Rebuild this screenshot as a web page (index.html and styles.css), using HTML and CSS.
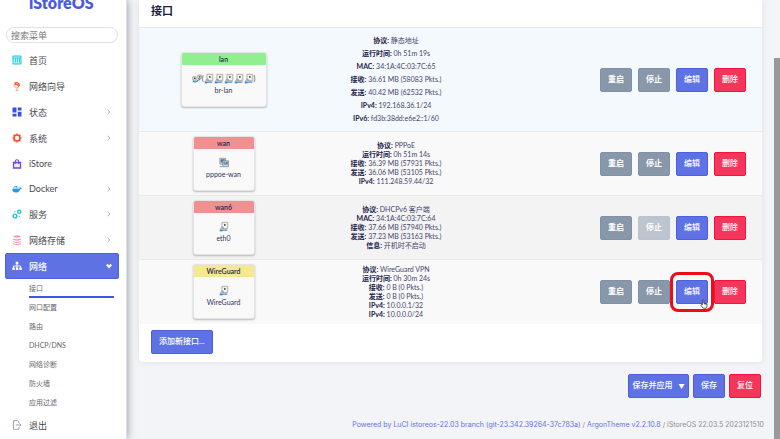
FILE: index.html
```
<!DOCTYPE html>
<html lang="zh-CN">
<head>
<meta charset="utf-8">
<meta name="viewport" content="width=device-width, initial-scale=1">
<title>iStoreOS - 接口</title>
<link rel="stylesheet" href="styles.css">
</head>
<body>
<svg class="defs" aria-hidden="true">
  <symbol id="chevron" viewBox="0 0 6 6"><path d="M1.5.8 4 3 1.5 5.2" fill="none" stroke="currentColor"/></symbol>
  <symbol id="port" viewBox="0 0 12 12">
    <path d="M3.5 1h7v7.500h-7z" fill="#efefe4" stroke="#a5a79f"/>
    <path d="M5 3h4v3.500H5z" fill="#fbfbf2"/>
    <path d="M6 3.200h2v2H6z" fill="#333"/>
    <path d="M1.500 9.500 4 6.500l2 1.800" fill="none" stroke="#6c7f91"/>
    <path d="M1 10.300h9" stroke="#4588d0" stroke-width="1.400"/>
    <path d="M1 11.200h3" stroke="#28609c"/>
  </symbol>
  <symbol id="bridge" viewBox="0 0 12 12">
    <path d="M1 4h4v4H1zM7 2h4v4H7z" fill="#e7e7dc" stroke="#92958f"/>
    <path d="M2.500 5h1.500v1.500H2.500zM8.500 3.200H10v1.500H8.500z" fill="#333"/>
    <path d="M1 9c2 2 5 1 6-1l3-1" fill="none" stroke="#4588d0" stroke-width="1.500"/>
  </symbol>
  <symbol id="tunnel" viewBox="0 0 12 12">
    <path d="M1 1h7v7H1z" fill="#e4e4d8" stroke="#92958f"/>
    <path d="M2 2h5v4H2z" fill="#3975b6"/>
    <path d="M4.500 4h7v7h-7z" fill="#d9d9cc" stroke="#858a88"/>
    <path d="M5.500 5h5v3.500h-5z" fill="#3f80c6"/>
    <path d="M6.500 6h2v1h-2z" fill="#e6f1fb"/>
    <path d="M1 11h3" stroke="#4588d0"/>
  </symbol>
</svg>

<aside class="sidebar">
  <a class="logo" href="#">iStoreOS</a>
  <input class="search" type="search" placeholder="搜索菜单" aria-label="搜索菜单">
  <nav>
    <ul class="menu">
      <li><a class="item" href="#"><svg class="icon" viewBox="0 0 10 10"><path d="M1 1h8v8H1z" fill="#b9f2fb" stroke="#20c5e0"/><path d="M1 3h8M3.500 3v4.500M5.500 3v4.500M7.500 3v4.500" stroke="#20c5e0" fill="none" stroke-width=".8"/></svg>首页</a></li>
      <li><a class="item" href="#"><svg class="icon" viewBox="0 0 10 10"><path d="M2.200 1.500C4 .5 6.500 1 7.600 2.500 8.200 4 7.800 5.500 6.500 6L4.800 4 2.800 4.300z" fill="#fb5a3d"/><path d="M2.200 3.500C2 6 4 7.500 6.700 6.700M5 7.500v1.500M3.500 9.300h3" fill="none" stroke="#fb7358" stroke-width=".7"/><path d="M4 2.200h1.800L5.300 3.600z" fill="#fff"/></svg>网络向导</a></li>
      <li><a class="item" href="#"><svg class="icon" viewBox="0 0 10 10"><path d="M.5.500h4v5h-4zM5.800.500h3.700v3H5.800zM.5 6.700h4v2.800h-4zM5.800 4.700h3.700v4.800H5.800z" fill="#3a4fe0"/></svg>状态<svg class="arrow"><use href="#chevron"/></svg></a></li>
      <li><a class="item" href="#"><svg class="icon" viewBox="0 0 10 10"><circle cx="5" cy="5" r="3" fill="none" stroke="#fb4a26" stroke-width="1.600"/><path d="M5 .5v1M5 8.500v1M.5 5h1M8.500 5h1M1.700 1.700l1 1M7.300 7.300l1 1M8.300 1.700l-1 1M2.700 7.300l-1 1" stroke="#fb4a26" stroke-width="1.600"/></svg>系统<svg class="arrow"><use href="#chevron"/></svg></a></li>
      <li><a class="item latin" href="#"><svg class="icon" viewBox="0 0 10 10"><path d="M1.500 3.500h7V9h-7z" fill="#eee7ff" stroke="#7546dc" stroke-width="1.300"/><path d="M3.300 5V2.500a1.700 1.700 0 0 1 3.400 0V5" fill="none" stroke="#7546dc" stroke-width="1.100"/></svg>iStore</a></li>
      <li><a class="item latin" href="#"><svg class="icon" viewBox="0 0 10 10"><path d="M.3 5h6.500c.7 0 1-.7.7-1.800l.5-.5c.5.300.7.700.7 1.100.5 0 .9 0 1.200.3-.3.800-.9 1.100-1.700 1.100C7.400 7.700 5.900 8.500 4 8.500 1.500 8.500.2 7.300.3 5z" fill="#2396ed"/><path d="M1 3.500h1.200v1H1zm1.500 0h1.200v1H2.500zm1.500 0h1.200v1H4zm1.500 0h1.200v1H5.500zm-3-1.400h1.200v1H2.500zm1.500 0h1.200v1H4z" fill="#2396ed"/></svg>Docker<svg class="arrow"><use href="#chevron"/></svg></a></li>
      <li><a class="item" href="#"><svg class="icon" viewBox="0 0 10 10"><circle cx="3" cy="7" r="1.900" fill="none" stroke="#19bfdc" stroke-width="1.400"/><circle cx="7.300" cy="2.700" r="1.600" fill="none" stroke="#19bfdc" stroke-width="1.300"/><path d="M2 3.500 3.500 2M6.800 8 8 6.800" stroke="#19bfdc"/></svg>服务<svg class="arrow"><use href="#chevron"/></svg></a></li>
      <li><a class="item" href="#"><svg class="icon" viewBox="0 0 10 10"><path d="M1 1.800C3 .2 7 .2 9 1.800 7 2.800 3 2.800 1 1.800zM1 3.500c2 1.200 6 1.200 8 0v1.300c-2 1-6 1-8 0zM1 5.900c2 1.200 6 1.200 8 0v1.200c-2 1-6 1-8 0zM1 8.200c2 1.100 6 1.100 8 0v.8c-2 1.200-6 1.200-8 0z" fill="#f48ca5"/></svg>网络存储<svg class="arrow"><use href="#chevron"/></svg></a></li>
      <li>
        <a class="item active" href="#"><svg class="icon" viewBox="0 0 10 10"><path d="M3.700.700h2.600v2.600H3.700zM.3 6.500h2.500V9H.3zM3.800 6.500h2.500V9H3.800zM7.300 6.500h2.500V9H7.300z" fill="#fff"/><path d="M5 3v4M1.500 6.800V5h7v1.800" stroke="#fff" fill="none" stroke-width=".9"/></svg>网络<svg class="arrow open"><use href="#chevron"/></svg></a>
        <ul class="submenu">
          <li><a class="current" href="#">接口</a></li>
          <li><a href="#">网口配置</a></li>
          <li><a href="#">路由</a></li>
          <li><a href="#">DHCP/DNS</a></li>
          <li><a href="#">网络诊断</a></li>
          <li><a href="#">防火墙</a></li>
          <li><a href="#">应用过滤</a></li>
        </ul>
      </li>
      <li><a class="item" href="#"><svg class="icon" viewBox="0 0 10 10"><path d="M7 3V2L5.500.700h-4v8.600H7V7M3.800 5H9M7.500 3.500 9 5 7.500 6.500" fill="none" stroke="#8e9aa8" stroke-width=".9"/></svg>退出</a></li>
    </ul>
  </nav>
</aside>

<main class="main">
  <section class="card">
    <h1>接口</h1>
    <table>
      <tbody>
        <tr class="lan">
          <td class="net"><div class="iface wide"><div class="name green">lan</div><div class="dev"><div class="ports"><svg><use href="#bridge"/></svg><span>(</span><svg><use href="#port"/></svg><svg><use href="#port"/></svg><svg><use href="#port"/></svg><svg><use href="#port"/></svg><svg><use href="#port"/></svg><span>)</span></div>br-lan</div></div></td>
          <td class="info"><b>协议:</b> 静态地址<br><b>运行时间:</b> 0h 51m 19s<br><b>MAC:</b> 34:1A:4C:03:7C:65<br><b>接收:</b> 36.61 MB (58083 Pkts.)<br><b>发送:</b> 40.42 MB (62532 Pkts.)<br><b>IPv4:</b> 192.168.36.1/24<br><b>IPv6:</b> fd3b:38dd:e6e2::1/60</td>
          <td><div class="actions"><button class="gray">重启</button><button class="gray">停止</button><button>编辑</button><button class="red">删除</button></div></td>
        </tr>
        <tr class="odd">
          <td class="net"><div class="iface"><div class="name pink">wan</div><div class="dev"><div class="ports"><svg><use href="#tunnel"/></svg></div>pppoe-wan</div></div></td>
          <td class="info"><b>协议:</b> PPPoE<br><b>运行时间:</b> 0h 51m 14s<br><b>接收:</b> 36.39 MB (57931 Pkts.)<br><b>发送:</b> 36.06 MB (53105 Pkts.)<br><b>IPv4:</b> 111.248.59.44/32</td>
          <td><div class="actions"><button class="gray">重启</button><button class="gray">停止</button><button>编辑</button><button class="red">删除</button></div></td>
        </tr>
        <tr class="even">
          <td class="net"><div class="iface"><div class="name pink">wan6</div><div class="dev"><div class="ports"><svg><use href="#port"/></svg></div>eth0</div></div></td>
          <td class="info"><b>协议:</b> DHCPv6 客户端<br><b>MAC:</b> 34:1A:4C:03:7C:64<br><b>接收:</b> 37.66 MB (57940 Pkts.)<br><b>发送:</b> 37.23 MB (53163 Pkts.)<br><b>信息:</b> 开机时不启动</td>
          <td><div class="actions"><button class="gray">重启</button><button class="gray" disabled>停止</button><button>编辑</button><button class="red">删除</button></div></td>
        </tr>
        <tr class="odd">
          <td class="net"><div class="iface"><div class="name yellow">WireGuard</div><div class="dev"><div class="ports"><svg><use href="#port"/></svg></div>WireGuard</div></div></td>
          <td class="info"><b>协议:</b> WireGuard VPN<br><b>运行时间:</b> 0h 30m 24s<br><b>接收:</b> 0 B (0 Pkts.)<br><b>发送:</b> 0 B (0 Pkts.)<br><b>IPv4:</b> 10.0.0.1/32<br><b>IPv4:</b> 10.0.0.0/24</td>
          <td><div class="actions"><button class="gray">重启</button><button class="gray">停止</button><div class="marked"><button>编辑</button><svg class="hand" viewBox="0 0 10 12"><path d="M3 7V1.500q1-1 1.700 0V5l4 1v3L7.500 11.300H4L1 7.500l.8-.8z" fill="#fff" stroke="#222" stroke-width=".9"/><path d="M6 5.500V7M7.500 6v1" stroke="#222" stroke-width=".6"/></svg></div><button class="red">删除</button></div></td>
        </tr>
      </tbody>
    </table>
    <div class="add"><button>添加新接口...</button></div>
  </section>
  <div class="page-actions"><button class="apply">保存并应用<span class="caret">▼</span></button><button>保存</button><button class="red">复位</button></div>
  <footer><a href="#">Powered by LuCI istoreos-22.03 branch (git-23.342.39264-37c783a)</a> / <a href="#">ArgonTheme v2.2.10.8</a> / iStoreOS 22.03.5 2023121510</footer>
</main>
<div class="scrollbar" aria-hidden="true"></div>
</body>
</html>
```
FILE: styles.css
```
* { box-sizing: border-box; }
body {
  margin: 0;
  display: flex;
  height: 100vh;
  overflow: hidden;
  background: #f3f4f7;
  color: #32325d;
  font: 8px/9px Lato, "Noto Sans CJK SC", sans-serif;
}
.defs { position: absolute; width: 0; height: 0; }
a { text-decoration: none; color: #5e72e4; }
ul { list-style: none; margin: 0; padding: 0; }

.sidebar {
  flex: 0 0 127px;
  background: #fff;
  border-right: 1px solid #dde1e8;
  box-shadow: 0 0 8px rgba(60, 65, 75, .55);
  z-index: 1;
}
.logo {
  display: block;
  margin-top: -9px;
  height: 36px;
  padding-left: 29px;
  color: #4a5be0;
  font-size: 16px;
  font-weight: 800;
  line-height: 24px;
}
.search {
  display: block;
  width: 112px;
  height: 16px;
  margin: 0 0 4px 6px;
  padding: 0 4px;
  border: 1px solid #e0e2e6;
  border-radius: 8px;
  background: #fff;
  color: #555;
  font: 9px/14px Lato, "Noto Sans CJK SC", sans-serif;
  outline: 0;
}
.search::placeholder { color: #777; opacity: 1; }
.item {
  display: flex;
  align-items: center;
  height: 26px;
  margin: 0 7px 0 5px;
  padding: 0 7px;
  border-radius: 3px;
  color: #48484e;
  font-size: 9px;
}
.latin { height: 25px; }
.icon { width: 10px; height: 10px; margin-right: 7px; }
.arrow { width: 6px; height: 6px; margin-left: auto; color: #aeb4bd; }
.open { transform: rotate(90deg); color: #fff; stroke-width: 2; }
.active { background: #5e72e4; color: #fff; font-weight: 500; box-shadow: inset 0 0 0 1px #4c60d8; }
.submenu { padding: 0 12px 0 29px; }
.submenu a {
  display: block;
  height: 19px;
  border-bottom: 2px solid transparent;
  color: #66666c;
  font-size: 7px;
  line-height: 19px;
}
.submenu .current { border-color: #4456df; }

.main { flex: 1; min-width: 0; padding: 0 12px; }
.card {
  background: #fff;
  border-radius: 0 0 4px 4px;
  box-shadow: 0 0 6px rgba(136, 152, 170, .18);
}
h1 {
  margin: 0;
  padding: 0 12px;
  height: 27px;
  color: #20203f;
  font-size: 11px;
  font-weight: 700;
  line-height: 22px;
}
table { width: 100%; border-collapse: collapse; table-layout: fixed; }
td { height: 64px; padding: 0; border-top: 1px solid #e7e9ec; }
.net { width: 169px; }
.info { width: 176px; text-align: center; color: #45456a; font-size: 7px; }
.info b { color: #22224a; font-weight: 700; }
.lan { background: #f4f9fd; }
.lan td { height: 104px; }
.lan .info { line-height: 13px; }
.odd { background: #f9f9f9; }
.even { background: #f3f3f3; }

.iface {
  width: 62px;
  margin: 0 auto;
  overflow: hidden;
  border: 1px solid #e2e4e7;
  border-radius: 3px;
  background: #f9f9f9;
  box-shadow: 0 1px 2px rgba(0, 0, 0, .25);
  text-align: center;
  font-size: 7px;
}
.wide { width: 86px; }
.name { height: 12px; color: #28284d; font-weight: 600; line-height: 12px; }
.green { background: #90f090; }
.pink { background: #f09090; }
.yellow { background: #f4e890; }
.dev { height: 41px; padding-top: 6px; }
.ports { display: flex; justify-content: center; align-items: center; height: 14px; margin-bottom: 1px; }
.ports svg { width: 10px; height: 11px; }

button {
  height: 24px;
  padding: 0 7px;
  border: 1px solid #4b60dc;
  border-radius: 2px;
  background: #5e72e4;
  color: #fff;
  font: 500 8px/9px Lato, "Noto Sans CJK SC", sans-serif;
}
.gray { background: #8898aa; border-color: #8292a5; font-weight: 700; }
.red { background: #f5365c; border-color: #f5133d; }
button:disabled { background: #bcc5cf; border-color: #b9c2cd; color: #fff; }
.actions { display: flex; justify-content: flex-end; gap: 6px; padding-right: 16px; }
.actions button { width: 32px; padding: 0; }
.marked { position: relative; display: flex; }
.marked::before {
  content: "";
  position: absolute;
  inset: -8px -6px;
  border: 3px solid #ed0c18;
  border-radius: 8px;
}
.hand { position: absolute; right: 0; bottom: -5px; width: 8px; height: 10px; }
.add { padding: 6px 12px 8px; }
.page-actions { display: flex; justify-content: flex-end; gap: 4px; padding: 12px 1px 0; }
.page-actions button { width: 32px; padding: 0; }
.page-actions .apply { width: 61px; }
.caret { margin-left: 6px; font-size: 6px; }
footer {
  padding-top: 22px;
  margin-right: -2px;
  color: #8b8f98;
  font-family: Inter, sans-serif;
  font-size: 7px;
  text-align: right;
}

.scrollbar {
  flex: 0 0 6px;
  background: linear-gradient(#f5f5f6 58px, #999 58px);
}
```
